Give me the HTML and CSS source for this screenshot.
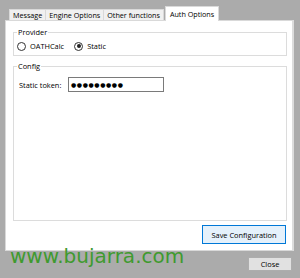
FILE: index.html
```html
<!DOCTYPE html>
<html>
<head>
<meta charset="utf-8">
<link rel="stylesheet" href="styles.css">
</head>
<body>
<div class="window">
  <div class="tabs">
    <div class="tab">Message</div>
    <div class="tab">Engine Options</div>
    <div class="tab">Other functions</div>
    <div class="tab tab-active">Auth Options</div>
  </div>
  <div class="panel">
    <fieldset class="group group-provider">
      <legend>Provider</legend>
      <div class="radios">
        <label class="radio"><span class="radio-dot"></span>OATHCalc</label>
        <label class="radio"><span class="radio-dot radio-dot-on"></span>Static</label>
      </div>
    </fieldset>
    <fieldset class="group group-config">
      <legend>Config</legend>
      <div class="field">
        <span class="field-label">Static token:</span>
        <div class="textbox">●●●●●●●●●</div>
      </div>
    </fieldset>
    <div class="actions">
      <button class="btn btn-default">Save Configuration</button>
    </div>
  </div>
  <div class="footer">
    <button class="btn btn-close">Close</button>
  </div>
  <div class="watermark">www.bujarra.com</div>
</div>
</body>
</html>
```

FILE: styles.css
```css
* { box-sizing: border-box; }
html, body { margin: 0; padding: 0; }
body {
  font-family: "Open Sans", "Liberation Sans", sans-serif;
  font-size: 7.4px;
  color: #000;
  background: #ababab;
}
.window {
  position: relative;
  width: 300px;
  height: 278px;
  background: #ababab;
  padding: 6px 6px 0 5px;
  overflow: hidden;
}
.tabs {
  display: flex;
  align-items: flex-end;
  height: 15px;
  margin-left: 4px;
  margin-bottom: -1px;
  position: relative;
  z-index: 1;
  font-size: 7.2px;
}
.tab {
  height: 11px;
  margin-bottom: 1px;
  padding: 0 3px;
  line-height: 10px;
  background: #f0f0f0;
  border: 1px solid #d9d9d9;
  border-bottom: none;
  margin-left: -1px;
  white-space: nowrap;
}
.tab:first-child { margin-left: 0; }
.tab-active {
  height: 15px;
  margin-bottom: 0;
  margin-left: 1px;
  padding: 2px 4px 0;
  background: #fff;
  line-height: 10px;
}
.panel {
  height: 231px;
  width: 289px;
  background: #fff;
  border: 1px solid #d9d9d9;
  border-right: 2px solid #dcdcdc;
  padding: 6px 5px 6px 7px;
  display: flex;
  flex-direction: column;
}
.group {
  margin: 0;
  padding: 0 3px;
  border: 1px solid #dcdcdc;
  min-width: 0;
}
.group legend {
  padding: 0 1px;
  line-height: 10px;
  height: 10px;
}
.group-provider { height: 29px; }
.radios {
  display: flex;
  align-items: center;
  height: 10px;
  margin-top: 4px;
}
.radio {
  display: flex;
  align-items: center;
  gap: 4px;
  line-height: 10px;
  margin-right: 10px;
}
.radio-dot {
  width: 9px;
  height: 9px;
  border: 1px solid #333;
  border-radius: 50%;
  background: #fff;
  display: flex;
  align-items: center;
  justify-content: center;
}
.radio-dot-on::after {
  content: "";
  width: 4px;
  height: 4px;
  border-radius: 50%;
  background: #222;
}
.group-config {
  margin-top: 5px;
  flex: 1;
}
.field {
  display: flex;
  align-items: center;
  margin-top: 6px;
  padding-left: 2px;
}
.field-label {
  width: 49px;
  flex: none;
}
.textbox {
  width: 96px;
  height: 15px;
  border: 1px solid #7a7a7a;
  padding-left: 2px;
  font-family: "DejaVu Sans", sans-serif;
  font-size: 6px;
  line-height: 13px;
  letter-spacing: 0.6px;
}
.actions {
  display: flex;
  justify-content: flex-end;
  margin-top: 4px;
  padding-right: 1px;
}
.btn {
  font-family: inherit;
  font-size: 7.4px;
  color: #000;
  padding: 0;
  margin: 0;
  line-height: 10px;
}
.btn-default {
  width: 84px;
  height: 19px;
  background: #e5f1fb;
  border: 1px solid #0078d7;
}
.footer {
  display: flex;
  justify-content: flex-end;
  margin-top: 6px;
  padding-right: 2px;
}
.btn-close {
  width: 44px;
  height: 14px;
  background: #e1e1e1;
  border: 1px solid #adadad;
}
.watermark {
  position: absolute;
  left: 10px;
  top: 246px;
  font-family: "DejaVu Sans", sans-serif;
  font-size: 20px;
  line-height: 20px;
  color: #3f9a2f;
  white-space: nowrap;
}
```
